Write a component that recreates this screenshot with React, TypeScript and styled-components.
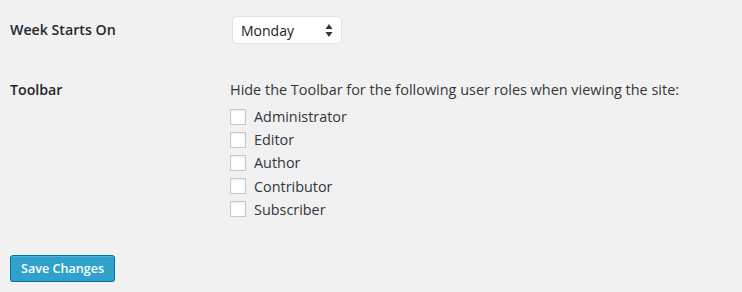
import React from 'react';
import styled, { createGlobalStyle } from 'styled-components';

const GlobalStyle = createGlobalStyle`
  html, body {
    margin: 0;
    padding: 0;
    background: #f1f1f1;
  }
  body {
    font-family: "Open Sans", "Liberation Sans", sans-serif;
    color: #32373c;
    font-size: 14px;
  }
`;

const roles = ['Administrator', 'Editor', 'Author', 'Contributor', 'Subscriber'];

const App = () => {
  return (
    <>
      <GlobalStyle />
      <StyledPage>
        <StyledRow>
          <StyledLabel>Week Starts On</StyledLabel>
          <StyledSelect>
            <span>Monday</span>
            <svg width="8" height="13" viewBox="0 0 8 13">
              <path d="M4 0 L7.5 5 L0.5 5 Z" fill="#333" />
              <path d="M4 13 L7.5 8 L0.5 8 Z" fill="#333" />
            </svg>
          </StyledSelect>
        </StyledRow>
        <StyledRow $top={36}>
          <StyledLabel $lineHeight={20}>Toolbar</StyledLabel>
          <div>
            <StyledDescription>Hide the Toolbar for the following user roles when viewing the site:</StyledDescription>
            <StyledRoleList>
              {roles.map((role) => (
                <StyledRole key={role}>
                  <StyledCheckbox />
                  {role}
                </StyledRole>
              ))}
            </StyledRoleList>
          </div>
        </StyledRow>
        <StyledSubmit>Save Changes</StyledSubmit>
      </StyledPage>
    </>
  );
};

export default App;

const StyledPage = styled.div`
  padding: 16px 10px 0;
`;

const StyledRow = styled.div<{ $top?: number }>`
  display: grid;
  grid-template-columns: 220px 1fr;
  align-items: start;
  margin-top: ${(p) => p.$top ?? 0}px;
`;

const StyledLabel = styled.div<{ $lineHeight?: number }>`
  font-weight: 600;
  font-size: 14.2px;
  color: #23282d;
  line-height: ${(p) => p.$lineHeight ?? 28}px;
`;

const StyledSelect = styled.div`
  box-sizing: border-box;
  width: 110px;
  height: 28px;
  margin-left: 2px;
  padding: 0 8px 0 8px;
  display: flex;
  align-items: center;
  justify-content: space-between;
  background: #fff;
  border: 1px solid #e2e2e4;
  border-radius: 5px;
  font-size: 14px;
  color: #222;
`;

const StyledDescription = styled.div`
  line-height: 20px;
  font-size: 14.45px;
  color: #32373c;
`;

const StyledRoleList = styled.div`
  margin-top: 5px;
`;

const StyledRole = styled.label`
  display: flex;
  align-items: center;
  height: 23.2px;
  font-size: 14.4px;
  color: #32373c;
`;

const StyledCheckbox = styled.span`
  box-sizing: border-box;
  width: 16px;
  height: 16px;
  margin-right: 8px;
  background: #fdfdfd;
  border: 1px solid #c8c8c8;
  box-shadow: inset 0 1px 2px rgba(0, 0, 0, 0.07);
`;

const StyledSubmit = styled.button`
  box-sizing: border-box;
  margin-top: 34px;
  height: 27px;
  padding: 0 10px;
  background: #2ea2cc;
  border: 1px solid #0074a2;
  border-radius: 3px;
  box-shadow: inset 0 1px 0 rgba(120, 200, 230, 0.5), 0 1px 0 rgba(0, 0, 0, 0.15);
  color: #fff;
  font-family: "Open Sans", "Liberation Sans", sans-serif;
  font-size: 12.6px;
  font-weight: 600;
  cursor: pointer;
`;
